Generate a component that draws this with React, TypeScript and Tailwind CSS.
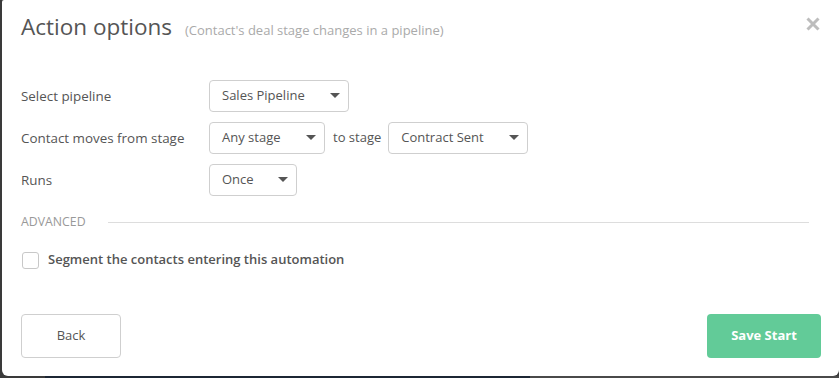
import React from "react";

const Caret = () => (
  <svg width="10" height="6" viewBox="0 0 10 6" className="shrink-0">
    <path d="M0 0 L10 0 L5 5 Z" fill="#555" />
  </svg>
);

function Select({ label, width }: { label: string; width: string }) {
  return (
    <div
      className={`flex h-[32px] items-center justify-between rounded-[4px] border border-[#cfcfcf] bg-white pl-[12px] pr-[8px] text-[13px] text-[#555] ${width}`}
    >
      <span>{label}</span>
      <Caret />
    </div>
  );
}

export default function App() {
  return (
    <div
      className="flex h-[378px] w-[839px] flex-col overflow-hidden bg-[#3a3a3a]"
      style={{ fontFamily: '"Open Sans", "Liberation Sans", sans-serif' }}
    >
      <div className="flex h-[376px] pl-[2px]">
        <div className="relative flex flex-1 flex-col rounded-b-[6px] rounded-tl-[2px] bg-white">
          <div className="flex items-baseline pl-[19px] pt-[9px]">
            <h1 className="text-[22.5px] leading-[36px] text-[#555]">Action options</h1>
            <span className="ml-[13px] text-[13px] text-[#aaa]">
              (Contact's deal stage changes in a pipeline)
            </span>
          </div>
          <button className="absolute right-[18px] top-[16px] text-[#bbb]">
            <svg width="16" height="16" viewBox="0 0 16 16">
              <path d="M2.5 2.5 L13.5 13.5 M13.5 2.5 L2.5 13.5" stroke="#bdbdbd" strokeWidth="3" />
            </svg>
          </button>

          <div className="mt-[35px] flex flex-col gap-[10px] pl-[19px] text-[13.4px] text-[#555]">
            <div className="flex items-center">
              <div className="w-[188px]">Select pipeline</div>
              <Select label="Sales Pipeline" width="w-[140px]" />
            </div>
            <div className="flex items-center">
              <div className="w-[188px]">Contact moves from stage</div>
              <Select label="Any stage" width="w-[116px]" />
              <span className="ml-[8px] mr-[7px] text-[13px]">to stage</span>
              <Select label="Contract Sent" width="w-[140px]" />
            </div>
            <div className="flex items-center">
              <div className="w-[188px]">Runs</div>
              <Select label="Once" width="w-[88px]" />
            </div>
          </div>

          <div className="mt-[17px] flex items-center pl-[19px] pr-[30px]">
            <span className="text-[12.3px] uppercase text-[#999]">Advanced</span>
            <div className="ml-[22px] h-px flex-1 bg-[#ddd]" />
          </div>

          <div className="mt-[19px] flex items-center pl-[20px]">
            <div className="h-[17px] w-[17px] rounded-[3px] border border-[#c8c8c8] bg-white" />
            <span className="ml-[9px] text-[13px] font-semibold text-[#555]">
              Segment the contacts entering this automation
            </span>
          </div>

          <div className="mt-auto mb-[18px] flex items-center justify-between pl-[19px] pr-[18px]">
            <button className="h-[44px] w-[100px] rounded-[4px] border border-[#cfcfcf] bg-white text-[13px] text-[#555]">
              Back
            </button>
            <button className="h-[44px] w-[114px] rounded-[4px] bg-[#62cb98] text-[13px] font-bold text-white">
              Save Start
            </button>
          </div>
        </div>
      </div>
      <div className="flex h-[2px]">
        <div className="w-[45px] bg-[#3a3a3a]" />
        <div className="w-[485px] bg-[#1c2634]" />
        <div className="flex-1 bg-[#4a4a4a]" />
      </div>
    </div>
  );
}
